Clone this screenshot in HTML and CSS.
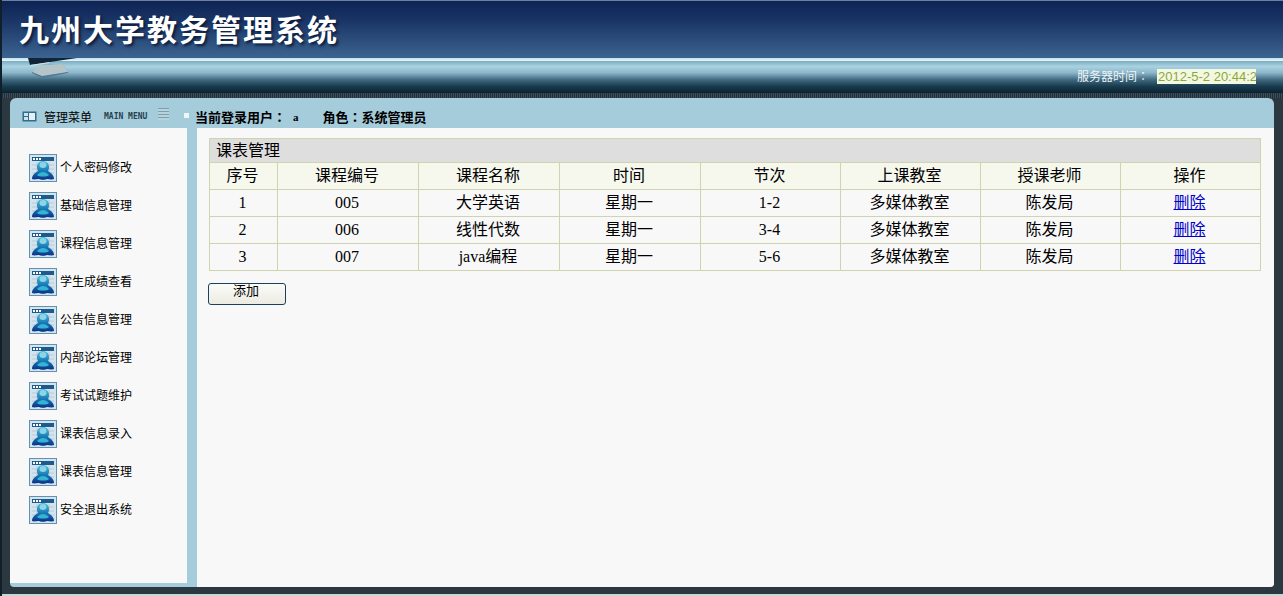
FILE: index.html
```html
<!DOCTYPE html>
<html lang="en">
<head>
    <meta charset="UTF-8">
    <title>九州大学教务管理系统</title>
    <link rel="stylesheet" href="styles.css">
</head>
<body>
    <svg class="defs" width="0" height="0">
        <defs>
            <linearGradient id="body-fill" x1="0" y1="0" x2="0" y2="1">
                <stop offset="0" stop-color="#4fc0dc"/>
                <stop offset="0.55" stop-color="#1577b4"/>
                <stop offset="1" stop-color="#0b2f86"/>
            </linearGradient>
        </defs>
        <symbol id="menu-icon" viewBox="0 0 28 28">
            <rect x="0.5" y="0.5" width="27" height="27" fill="#d5e3ec" stroke="#5f93b4"/>
            <rect x="3" y="3" width="22" height="4" fill="#1d5b8c"/>
            <rect x="4" y="4" width="2" height="2" fill="#fff"/>
            <rect x="7" y="4" width="2" height="2" fill="#fff"/>
            <rect x="10" y="4" width="2" height="2" fill="#fff"/>
            <path d="M3 11h22M3 15h22M3 19h22M8 8v17M20 8v17" stroke="#b6cbda"/>
            <path d="M3 25c0-4 3-6 6-8-1-2-1-3-1-4 0-4 3-6 6-6 3 0 6 2 6 6 0 1 0 2-1 4 3 2 6 4 6 8-2 1-5 0-7 0-1 1-7 1-8 0-2 0-5 1-7 0z" fill="url(#body-fill)"/>
            <ellipse cx="14" cy="11" rx="3.5" ry="3" fill="#8fd3e6"/>
            <path d="M8 21c2-2 4-3 6-3 2 0 4 1 6 3-2 2-10 2-12 0z" fill="#35b3d4"/>
        </symbol>
    </svg>

    <header class="top">
        <h1>九州大学教务管理系统</h1>
    </header>
    <div class="bar">
        <svg class="monitor" width="52" height="22" viewBox="0 0 52 22">
            <path d="M15 7l21-1 5 8-9-1-6-7z" fill="#5f9cc4" opacity="0.7"/>
            <path d="M5 14l10-7 21-1 5 8-26 5z" fill="#b4c4c8"/>
            <path d="M5 14l10 4 26-4v1l-26 5-10-5z" fill="#4d7a96"/>
            <path d="M1 0h49l-27 4-20 3z" fill="#10243a"/>
            <path d="M3 7l20-3-1 1-18 3z" fill="#d8e4ea"/>
        </svg>
        <div class="server-time">
            <span class="server-label">服务器时间<span class="colon">：</span></span>
            <span class="clock">2012-5-2 20:44:22</span>
        </div>
    </div>
    <div class="dither"></div>

    <div class="panel">
        <div class="panel-head">
            <div class="menu-title">
                <svg class="title-icon" width="15" height="11" viewBox="0 0 15 11">
                    <rect x="0.5" y="0.5" width="14" height="10" fill="#2c6f92"/>
                    <rect x="2" y="2" width="4" height="3" fill="#cfe2ea"/>
                    <rect x="2" y="6" width="4" height="3" fill="#cfe2ea"/>
                    <rect x="7" y="2" width="6" height="7" fill="#e8f0f3"/>
                </svg>
                <span class="menu-cn">管理菜单</span>
                <span class="menu-en">MAIN MENU</span>
                <span class="menu-lines"></span>
            </div>
            <div class="user-info">
                <span class="dot"></span>
                <span>当前登录用户<span class="colon">：</span></span>
                <span class="user-name">a</span>
                <span>角色<span class="colon">：</span>系统管理员</span>
            </div>
        </div>
        <div class="panel-body">
            <nav class="sidebar">
                <a class="menu-item"><svg width="28" height="28"><use href="#menu-icon"/></svg>个人密码修改</a>
                <a class="menu-item"><svg width="28" height="28"><use href="#menu-icon"/></svg>基础信息管理</a>
                <a class="menu-item"><svg width="28" height="28"><use href="#menu-icon"/></svg>课程信息管理</a>
                <a class="menu-item"><svg width="28" height="28"><use href="#menu-icon"/></svg>学生成绩查看</a>
                <a class="menu-item"><svg width="28" height="28"><use href="#menu-icon"/></svg>公告信息管理</a>
                <a class="menu-item"><svg width="28" height="28"><use href="#menu-icon"/></svg>内部论坛管理</a>
                <a class="menu-item"><svg width="28" height="28"><use href="#menu-icon"/></svg>考试试题维护</a>
                <a class="menu-item"><svg width="28" height="28"><use href="#menu-icon"/></svg>课表信息录入</a>
                <a class="menu-item"><svg width="28" height="28"><use href="#menu-icon"/></svg>课表信息管理</a>
                <a class="menu-item"><svg width="28" height="28"><use href="#menu-icon"/></svg>安全退出系统</a>
            </nav>
            <main class="content">
                <table class="schedule">
                    <colgroup>
                        <col class="col-no">
                        <col class="col-wide"><col class="col-wide"><col class="col-wide">
                        <col class="col-mid"><col class="col-mid"><col class="col-mid"><col class="col-mid">
                    </colgroup>
                    <thead>
                        <tr><th class="table-title" colspan="8">课表管理</th></tr>
                        <tr class="head-row">
                            <th>序号</th><th>课程编号</th><th>课程名称</th><th>时间</th>
                            <th>节次</th><th>上课教室</th><th>授课老师</th><th>操作</th>
                        </tr>
                    </thead>
                    <tbody>
                        <tr>
                            <td>1</td><td>005</td><td>大学英语</td><td>星期一</td>
                            <td>1-2</td><td>多媒体教室</td><td>陈发局</td><td><a href="#">删除</a></td>
                        </tr>
                        <tr>
                            <td>2</td><td>006</td><td>线性代数</td><td>星期一</td>
                            <td>3-4</td><td>多媒体教室</td><td>陈发局</td><td><a href="#">删除</a></td>
                        </tr>
                        <tr>
                            <td>3</td><td>007</td><td>java编程</td><td>星期一</td>
                            <td>5-6</td><td>多媒体教室</td><td>陈发局</td><td><a href="#">删除</a></td>
                        </tr>
                    </tbody>
                </table>
                <button class="add-btn" type="button">添加</button>
            </main>
        </div>
    </div>
    <div class="bottom-strip"></div>
</body>
</html>
```

FILE: styles.css
```css
* {
    margin: 0;
    padding: 0;
    box-sizing: border-box;
    font-family: "Liberation Serif", "Noto Sans CJK SC", serif;
}

html, body {
    height: 596px;
    overflow: hidden;
}

body {
    background: #2b3840;
    color: #000;
    border-left: 2px solid #10202a;
}

.defs {
    position: absolute;
}

.colon {
    font-family: "Noto Sans CJK TC", sans-serif;
}

.top {
    height: 58px;
    padding: 8px 0 0 17px;
    background: linear-gradient(#0e2356 0%, #1a3566 35%, #3c6490 100%);
    border-top: 1px solid #6d7f99;
}

.top h1 {
    font-family: "Noto Sans CJK SC", sans-serif;
    font-size: 30px;
    line-height: 38px;
    font-weight: 700;
    letter-spacing: 2px;
    color: #fff;
    text-shadow: 2px 2px 3px #0a1a3a;
}

.bar {
    position: relative;
    height: 35px;
    background: linear-gradient(#bfe0ea 0%, #e6f4f8 7%, #7fb0c6 10%, #a9d2e1 24%, #8cb6ca 42%, #3f6a80 62%, #1b3d50 80%, #0a2230 100%);
}

.monitor {
    position: absolute;
    left: 25px;
    top: 0;
}

.server-time {
    display: flex;
    justify-content: flex-end;
    align-items: center;
    height: 100%;
    padding: 2px 27px 0 0;
}

.server-label {
    font-family: "Noto Sans CJK SC", sans-serif;
    font-size: 12px;
    color: #f0f4f6;
    margin: -3px 8px 0 0;
}

.clock {
    display: block;
    width: 99px;
    height: 15px;
    overflow: hidden;
    white-space: nowrap;
    background: #f4f8e2;
    font-family: "Liberation Sans", sans-serif;
    font-size: 13px;
    line-height: 16px;
    color: #8aa83c;
    padding-left: 1px;
}

.dither {
    height: 5px;
    background: repeating-linear-gradient(90deg, #20303a 0 1px, #3f4e58 1px 2px);
}

.panel {
    height: 489px;
    margin: 0 9px 0 8px;
    display: flex;
    flex-direction: column;
}

.panel-head {
    height: 30px;
    flex: none;
    display: flex;
    align-items: center;
    padding-top: 7px;
    background: #a5ccdb;
    border-radius: 6px 6px 0 0;
}

.menu-title {
    width: 170px;
    flex: none;
    display: flex;
    align-items: center;
    padding-left: 12px;
}

.title-icon {
    margin-right: 7px;
}

.menu-cn {
    font-family: "Noto Sans CJK SC", sans-serif;
    font-size: 12px;
}

.menu-en {
    font-family: "DejaVu Sans Mono", monospace;
    font-size: 8px;
    font-weight: 700;
    margin-left: 12px;
    color: #24434f;
    width: 48px;
    white-space: nowrap;
}

.menu-lines {
    width: 11px;
    height: 12px;
    margin: -6px 0 0 6px;
    background: repeating-linear-gradient(#7f9eae 0 1px, #b9d3dd 1px 3px);
}

.user-info {
    display: flex;
    align-items: center;
    font-family: "Noto Sans CJK SC", sans-serif;
    font-size: 13px;
    font-weight: 700;
}

.user-info span {
    font-family: inherit;
}

.user-info .colon {
    font-family: "Noto Sans CJK TC", sans-serif;
}

.dot {
    width: 5px;
    height: 5px;
    background: #eef6f9;
    margin: -2px 6px 0 4px;
}

.user-info .user-name {
    font-family: "Liberation Serif", serif;
    font-size: 11px;
    margin: 0 24px 0 7px;
}

.panel-body {
    flex: 1;
    display: flex;
    min-height: 0;
    background: #a5ccdb;
    border-radius: 0 0 4px 4px;
}

.sidebar {
    width: 177px;
    height: 455px;
    flex: none;
    background: #f8f8f8;
    padding-top: 26px;
}

.menu-item {
    display: flex;
    align-items: center;
    height: 28px;
    margin: 0 0 10px 19px;
    padding-bottom: 4px;
    font-family: "Noto Sans CJK SC", sans-serif;
    font-size: 12px;
}

.menu-item svg {
    margin: 0 3px -4px 0;
}

.content {
    flex: 1;
    margin-left: 10px;
    background: #f8f8f8;
    padding: 10px 13px 0 12px;
    border-radius: 0 0 4px 0;
}

.schedule {
    width: 1052px;
    table-layout: fixed;
    border-collapse: collapse;
    font-size: 16px;
}

.col-no {
    width: 68px;
}

.col-wide {
    width: 141px;
}

.col-mid {
    width: 140px;
}

.schedule th,
.schedule td {
    border: 1px solid #cfd3ae;
    height: 27px;
    padding-right: 2px;
    text-align: center;
    font-weight: 400;
    line-height: 20px;
}

.schedule .table-title {
    height: 24px;
    text-align: left;
    padding-left: 6px;
    background: #dedede;
}

.head-row th {
    background: #f6f8ee;
}

.schedule a {
    color: #0000c8;
}

.add-btn {
    display: block;
    width: 78px;
    height: 22px;
    margin: 12px 0 0 -1px;
    padding: 0 2px 8px 0;
    background: linear-gradient(#fbfbf8, #ecebe2);
    border: 1px solid #1e3f5c;
    border-radius: 3px;
    font-family: "Noto Sans CJK SC", sans-serif;
    font-size: 13px;
    line-height: 12px;
    color: #000;
}

.bottom-strip {
    height: 2px;
    margin-top: 7px;
    background: #c5d8d8;
}
```
